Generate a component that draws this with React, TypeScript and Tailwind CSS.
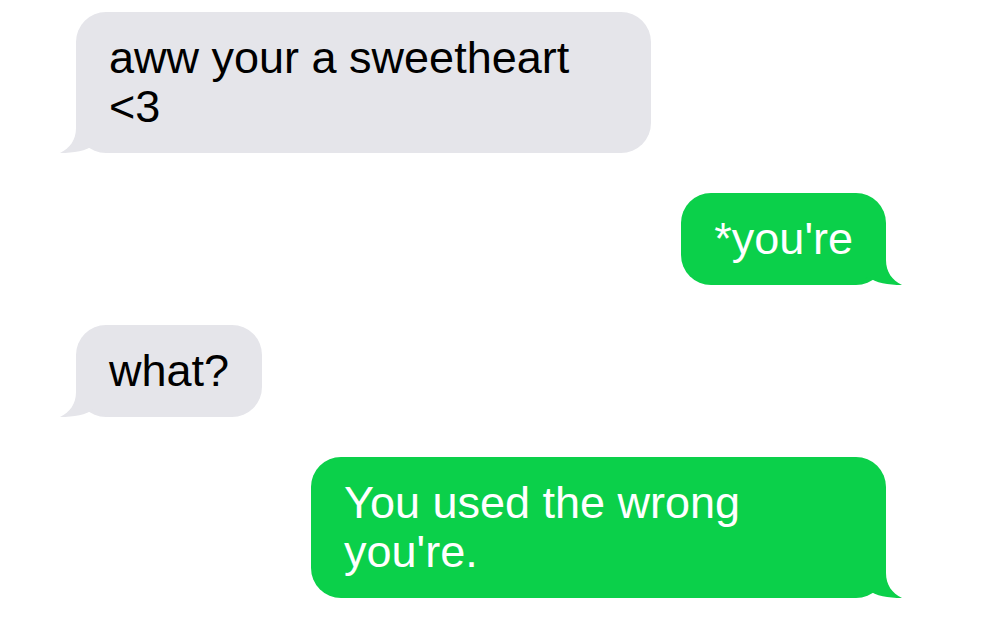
const messages = [
  { id: 1, fromMe: false, text: "aww your a sweetheart <3" },
  { id: 2, fromMe: true, text: "*you're" },
  { id: 3, fromMe: false, text: "what?" },
  { id: 4, fromMe: true, text: "You used the wrong you're." },
];

function Tail({ fromMe, color }: { fromMe: boolean; color: string }) {
  return (
    <svg
      width="60"
      height="40"
      viewBox="0 0 60 40"
      className={
        fromMe
          ? "absolute bottom-0 right-[-16px] -scale-x-100"
          : "absolute bottom-0 left-[-16px]"
      }
    >
      <path
        d="M16 0 L56 0 L56 40 C46 40 40 36 34 32 C26 38 14 40 0 40 C10 35 16 27 16 15 Z"
        fill={color}
      />
    </svg>
  );
}

export default function App() {
  return (
    <div
      className="min-h-[621px] w-full bg-white flex flex-col gap-[40px] pt-[12px] pl-[76px] pr-[101px]"
      style={{ fontFamily: '"Liberation Sans", Arial, sans-serif' }}
    >
      {messages.map((m) => (
        <div key={m.id} className={`flex ${m.fromMe ? "justify-end" : "justify-start"}`}>
          <div
            className={`relative max-w-[575px] rounded-[30px] px-[33px] pt-[21px] pb-[22px] text-[45px] leading-[49px] ${
              m.fromMe ? "bg-[#0bd04a] text-white" : "bg-[#e5e5ea] text-black"
            }`}
          >
            <Tail fromMe={m.fromMe} color={m.fromMe ? "#0bd04a" : "#e5e5ea"} />
            <span className="relative">{m.text}</span>
          </div>
        </div>
      ))}
    </div>
  );
}
